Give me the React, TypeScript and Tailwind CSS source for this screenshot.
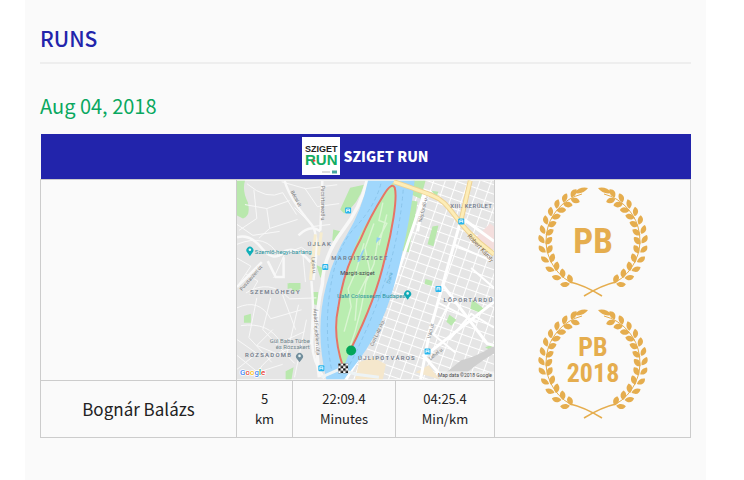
const LEAF_ANGLES = [23, 34, 45, 56, 67, 78, 89, 100, 112, 124, 136, 148];

function Branch() {
  return (
    <g>
      <path d="M44 7A48 48 0 0 0 32 95" fill="none" stroke="#e5ad4e" />
      <path d="M32 95Q46 98 64 109" fill="none" stroke="#e5ad4e" strokeWidth="1.6" />
      <path d="M50 1Q42-1 36 6Q45 8 50 1Z" />
      {LEAF_ANGLES.map((angle) => (
        <g key={angle} transform={`rotate(${90 - angle} 55 54) translate(7 54)`}>
          <path d="M-.5 3C-6 3-8-1-6-5C-2-4 0-1-.5 3Z" />
          <path d="M.5 4C0-1 3-4 7-3C8 1 5 5 .5 4Z" />
        </g>
      ))}
    </g>
  );
}

function Badge({ year }: { year?: string }) {
  return (
    <svg role="img" aria-label={year ? `Personal best ${year}` : 'Personal best'} viewBox="0 0 110 110" className="size-[110px] overflow-visible fill-[#e5ad4e]">
      <Branch />
      <g transform="matrix(-1 0 0 1 110 0)"><Branch /></g>
      <g textAnchor="middle" className="font-['Roboto_Condensed','Open_Sans_Condensed','Liberation_Sans_Narrow',sans-serif] font-bold">
        {year ? (
          <>
            <text x="55" y="47" fontSize="26">PB</text>
            <text x="55" y="73" fontSize="26">{year}</text>
          </>
        ) : (
          <text x="55" y="66" fontSize="35">PB</text>
        )}
      </g>
    </svg>
  );
}

function Logo() {
  return (
    <svg role="img" aria-label="Sziget Run logo" viewBox="0 0 38 38" className="size-[38px] bg-white font-['Liberation_Sans',sans-serif] font-bold">
      <text x="3" y="15" fontSize="9" fill="#222">SZIGET</text>
      <text x="3" y="28" fontSize="15" fill="#12ac62">RUN</text>
      <path d="M11 22l3 2-3 1z" fill="#e33" />
      <path d="M20 35h8" stroke="#bbb" />
      <path d="M30 35h5" stroke="#4aa9a0" strokeWidth="3" />
    </svg>
  );
}

function Station({ x, y }: { x: number; y: number }) {
  return (
    <g transform={`translate(${x} ${y})`}>
      <rect x="-3" y="-3" width="6" height="6" rx="1" fill="#27b5ec" />
      <path d="M-1.5 1.5v-3h3v3M-1.5 0h3" fill="none" stroke="#fff" strokeWidth=".8" />
    </g>
  );
}

function Pin({ x, y, color }: { x: number; y: number; color: string }) {
  return (
    <g transform={`translate(${x} ${y})`}>
      <path d="M0 5L-2.5 1.5A3.5 3.5 0 1 1 2.5 1.5Z" fill={color} />
      <circle cy="-1.5" r="1.3" fill="#e8f4f4" />
    </g>
  );
}

function RouteMap() {
  return (
    <svg role="img" aria-label="Route map" viewBox="0 0 259 200" className="block h-[200px] w-full font-[Roboto,sans-serif] font-normal">
      <defs>
        <pattern id="blocks" width="11" height="9" patternUnits="userSpaceOnUse" patternTransform="rotate(19)">
          <path d="M0 0H11M0 0V9" stroke="#fff" strokeWidth="2" />
        </pattern>
        <pattern id="flag" x="102" y="184" width="5" height="5" patternUnits="userSpaceOnUse">
          <path d="M0 0h5v5H0z" fill="#fff" />
          <path d="M0 0h2.5v2.5H0zM2.5 2.5H5V5H2.5z" fill="#111" />
        </pattern>
      </defs>
      <rect width="259" height="200" fill="#e5e5e5" />

      {/* Buda side */}
      <path d="M0 0H8Q5 10 11 22Q14 36 6 38L0 35ZM114 7L128 4Q122 24 108 33L104 29ZM97 49L105 51L100 62L96 60ZM52 103h12v6l-7 3zM75 112h7v14l-6-2zM7 136l7-2v9H7zM80 85l9 4-5 9zM49 192l8-4-2 12h-6zM51 103l8 4-8 2z" fill="#b9e8ad" />
      <g fill="none" stroke="#f8f8f8">
        <path d="M10 3Q30 20 46 12L60 34M8 24L30 28L53 20M17 9L20 38L2 50M30 28L33 48L22 58M33 48L61 39M0 64Q30 52 42 76M42 76L65 67L80 78M0 78L14 86L2 104M66 70L69 102M9 113Q33 98 53 119L80 118M0 128Q22 118 34 139L65 130M4 146Q32 142 44 163L68 152M20 118L12 158L35 183M34 118L26 150L58 184M0 160L20 174L0 190M46 115L59 150M62 125L50 176M18 198Q30 172 64 167M70 140L58 198M37 98L48 74M0 44L16 55L43 51M58 27L77 46L94 44M68 7L81 26L103 23M45 1L69 8L101 4M9 94L21 101L13 115M36 150L20 166L44 176M76 130L74 165M0 176l21 17 25-8" />
        <path d="M48 0Q53 18 75 44Q84 54 77 100M86 0L84 50M0 57Q13 53 25 68T48 71Q60 65 74 82M31 81L39 97H47V77M75 101Q78 137 76 158T88 199M0 107L25 82M62 55Q74 43 84 51" strokeWidth="2.5" />
        <path d="M131 0Q125 26 106 51T86 104Q76 145 83 198" strokeWidth="3.5" />
        <path d="M79 54L74 100M85 52L82 75" stroke="#f7edcf" strokeWidth="3" />
      </g>

      {/* Pest side */}
      <path d="M173 0H259V200H108L127 177L152 125Z" fill="url(#blocks)" />
      <path d="M171 19l11 2-9 51-10-2zM197 46l6-1-5 21-6-2zM190 99l7 2-1 5-7-2zM214 135l7 5-5 6-5-4zM237 120l12 9-4 4-10-4zM178 0h12l-5 18-9-4zM250 168l9-4v8zM196 10l7 1-2 5z" fill="#b9e8ad" />
      <path d="M241 57L255 43L259 46V69H248Z" fill="#f4dedd" />
      <path d="M202 200L226 181Q242 177 259 166V174Q240 185 224 200Z" fill="#cfcfcf" />
      <path d="M123 183l14-5 13 7-3 15h-28zM180 193l13-7 11 14z" fill="#f5e7cc" />
      <g fill="none" stroke="#fff">
        <path d="M226 38L210 95L194 153L185 200M190 9L159 102L135 158L110 200M190 10L182 51M208 106L252 164L259 166M259 122L190 176M229 39L259 61M187 175L207 198" strokeWidth="3" />
        <path d="M218 64L257 81M203 123L242 143M236 88L259 108M214 160L236 134L259 148M220 173L198 155L215 121" strokeWidth="2" />
      </g>

      {/* Danube and Margaret Island */}
      <path d="M132 0H179Q174 45 161 96T124 179L108 200H90Q78 150 90 105Q97 77 111 54Q126 29 132 0Z" fill="#a0d7fc" />
      <path d="M157 2Q162 5 159 27Q156 63 142 102Q131 138 115 169L106 191Q94 152 107 106Q115 70 128 47L148 12Z" fill="#b9edb0" />
      <path d="M147 22l-4 18 8 3-9 17-4 24-8 18-5 27-6 23-5 15M138 43l-9 25 5 23-13 26-2 24M128 63l-8 28-8 18 3 18-7 25M151 34l-8 31" fill="none" stroke="#daf5d2" strokeWidth="1.4" />
      <path d="M126 71l3-3-5 13-3 1zM141 57l4 1-5 5z" fill="#91cef3" />
      <path d="M168 2Q165 51 150 98T110 192M145 3Q139 26 119 47T93 116Q88 155 96 194" fill="none" stroke="#8ac5eb" strokeDasharray="4 3" />
      <path d="M85 198L103 190L120 195L143 198" fill="none" stroke="#edf3f5" strokeWidth="3" />
      <path d="M158 1Q185 10 197 15C217 22 218 44 259 74M226 39L235 0" fill="none" stroke="#eed294" strokeWidth="5" />
      <path d="M158 1Q185 10 197 15C217 22 218 44 259 74M226 39L235 0" fill="none" stroke="#fdedb7" strokeWidth="3" />

      <path d="M107 188Q96 155 102 128Q107 91 124 60Q134 36 148 14Q156 1 159 7C162 18 156 52 149 78Q140 119 115 169" fill="none" stroke="#e77467" strokeWidth="2" />

      <g fill="#6d7787" fontSize="6" fontWeight="500" letterSpacing="1.3">
        <text x="71" y="66">ÚJLAK</text>
        <text x="95" y="80">MARGITSZIGET</text>
        <text x="13" y="114">SZEMLŐHEGY</text>
        <text x="8" y="178">RÓZSADOMB</text>
        <text x="122" y="181">ÚJLIPÓTVÁROS</text>
        <text x="208" y="122">LŐPORTÁRDŰ</text>
        <text x="215" y="27" letterSpacing=".4">XIII. KERÜLET</text>
      </g>
      <g fontSize="6">
        <text x="18" y="74" fill="#27919b">Szemlő-hegyi-barlang</text>
        <text x="101" y="118" fill="#27919b">UaM Colosseum Budapest</text>
        <text x="104" y="95" fill="#3f4548">Margit-sziget</text>
        <g fill="#71858d">
          <text x="33" y="163">Gül Baba Türbe</text>
          <text x="39" y="170">és Rózsakert</text>
        </g>
      </g>
      <g fontSize="5" fill="#777">
        <text transform="translate(54 11) rotate(62)">Bécsi út</text>
        <text transform="translate(85 5) rotate(90)">Pacsirtamező u.</text>
        <text transform="translate(75 77) rotate(85)">Lajos u.</text>
        <text transform="translate(77 129) rotate(86)">Árpád Fejedelem útja</text>
        <text transform="translate(5 111) rotate(-49)">Pusztaszeri út</text>
        <text transform="translate(186 42) rotate(-76)">Népfürdő u.</text>
        <text transform="translate(137 167) rotate(-65)">Carl Lutz rkp.</text>
        <text transform="translate(195 159) rotate(-77)">Váci út</text>
        <text transform="translate(195 181) rotate(-39)">Lehel u.</text>
        <text transform="translate(154 104) rotate(-75)" fill="#5ba6c8">Duna</text>
        <text transform="translate(232 56) rotate(47)" fontSize="6" fill="#806b50">Róbert Károly</text>
      </g>

      <Station x={112} y={30} />
      <Station x={89} y={87} />
      <Station x={85} y={189} />
      <Station x={226} y={41} />
      <Station x={203} y={109} />
      <Station x={192} y={172} />
      <Pin x={13} y={71} color="#10afb9" />
      <Pin x={172} y={115} color="#10a9b5" />
      <Pin x={63} y={178} color="#718e9c" />

      <circle cx="115" cy="171" r="5" fill="#03a65a" />
      <rect x="102" y="184" width="10" height="10" fill="url(#flag)" />

      <text x="3" y="196" fontSize="8" fontWeight="500" stroke="#fff" strokeWidth="1.5" paintOrder="stroke">
        <tspan fill="#4285f4">G</tspan><tspan fill="#ea4335">o</tspan><tspan fill="#fbbc05">o</tspan><tspan fill="#4285f4">g</tspan><tspan fill="#34a853">l</tspan><tspan fill="#ea4335">e</tspan>
      </text>
      <rect x="204" y="192" width="55" height="8" fill="#f5f5f5" fillOpacity=".7" />
      <text x="257" y="198" textAnchor="end" fontSize="5" fill="#444">Map data ©2018 Google</text>
    </svg>
  );
}

function Stat({ value, unit }: { value: string; unit: string }) {
  return (
    <td className="border border-[#ccc] py-2 text-[13px] leading-5">
      <div>{value}</div>
      <div>{unit}</div>
    </td>
  );
}

export default function App() {
  return (
    <main className="mr-[38px] ml-[25px] min-h-screen bg-[#fafafa] px-[15px] pt-[22px] pb-10 font-['Noto_Sans_CJK_SC',sans-serif] text-[#222]">
      <h1 className="border-b-2 border-[#eee] pb-2 text-[21px] leading-8 font-medium text-[#2224ab]">RUNS</h1>
      <h2 className="pt-[26px] pb-3 text-[20px] leading-8 text-[#09a860]">Aug 04, 2018</h2>
      <table className="w-full table-fixed border-collapse text-center">
        <colgroup>
          <col />
          <col className="w-[56px]" />
          <col className="w-[103px]" />
          <col className="w-[99px]" />
          <col />
        </colgroup>
        <thead>
          <tr>
            <th colSpan={5} className="h-[45px] bg-[#2224ab] p-0 text-[14px] leading-5 font-black text-white">
              <div className="flex items-center justify-center gap-[3px]">
                <Logo />
                SZIGET RUN
              </div>
            </th>
          </tr>
        </thead>
        <tbody>
          <tr>
            <td className="border border-[#ccc]" />
            <td colSpan={3} className="border border-[#ccc] p-0"><RouteMap /></td>
            <td rowSpan={2} className="border border-[#ccc] p-0 pt-[7px] align-top">
              <div className="flex flex-col items-center gap-3">
                <Badge />
                <Badge year="2018" />
              </div>
            </td>
          </tr>
          <tr>
            <td className="border border-[#ccc] text-[17px] leading-6">Bognár Balázs</td>
            <Stat value="5" unit="km" />
            <Stat value="22:09.4" unit="Minutes" />
            <Stat value="04:25.4" unit="Min/km" />
          </tr>
        </tbody>
      </table>
    </main>
  );
}
